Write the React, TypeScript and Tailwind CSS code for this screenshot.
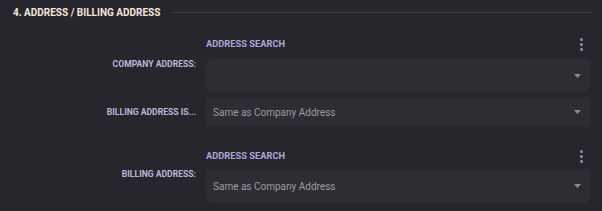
const font = { fontFamily: "Roboto, 'Liberation Sans', sans-serif" };

function Dots() {
    return (
        <div className="flex flex-col gap-[2px] items-center w-[4px]">
            <span className="w-[3px] h-[3px] rounded-[1px] bg-[#85848c]"/>
            <span className="w-[3px] h-[3px] rounded-[1px] bg-[#85848c]"/>
            <span className="w-[3px] h-[3px] rounded-[1px] bg-[#85848c]"/>
        </div>
    );
}

function Caret() {
    return (
        <svg width="7" height="4" viewBox="0 0 7 4" className="shrink-0">
            <path d="M0 0 L7 0 L3.5 4 Z" fill="#8b8a91"/>
        </svg>
    );
}

function SelectBox({value, height}: { value?: string, height: string }) {
    return (
        <div className={`flex items-center justify-between rounded-[6px] bg-[#2e2d33] pl-[7px] pr-[10px] ${height}`}>
            <span className="text-[10px] text-[#9c9ba2]">{value}</span>
            <Caret/>
        </div>
    );
}

function SearchHeader() {
    return (
        <div className="flex items-center justify-between h-[16px] pr-[8px]">
            <span className="text-[9.3px] font-bold text-[#a9a8dc]">ADDRESS SEARCH</span>
            <Dots/>
        </div>
    );
}

const labelCls = "text-right text-[8.6px] leading-[12px] font-bold text-[#b9b8d8]";

export default function App() {
    return (
        <div className="w-[602px] h-[211px] bg-[#27262c] overflow-hidden" style={font}>
            <div className="flex items-center gap-[10px] pl-[13px] pr-[11px] pt-[6px] h-[18px]">
                <span className="text-[10px] font-bold text-[#f1e8dc] whitespace-nowrap">
                    4. ADDRESS / BILLING ADDRESS
                </span>
                <div className="flex-1 h-px bg-[#3b3a41]"/>
            </div>

            <div className="grid grid-cols-[196px_1fr] gap-x-[10px] pr-[11px] pt-[18px]">
                <div/>
                <SearchHeader/>

                <div className={`${labelCls} pt-[6px]`}>COMPANY ADDRESS:</div>
                <div className="pt-[7px]">
                    <SelectBox height="h-[33px]"/>
                </div>

                <div className={`${labelCls} self-center pt-[5px]`}>BILLING ADDRESS IS...</div>
                <div className="pt-[5px]">
                    <SelectBox value="Same as Company Address" height="h-[30px]"/>
                </div>

                <div/>
                <div className="pt-[21px]">
                    <SearchHeader/>
                </div>

                <div className={`${labelCls} pt-[4px]`}>BILLING ADDRESS:</div>
                <div className="pt-[5px]">
                    <SelectBox value="Same as Company Address" height="h-[34px]"/>
                </div>
            </div>
        </div>
    );
}
